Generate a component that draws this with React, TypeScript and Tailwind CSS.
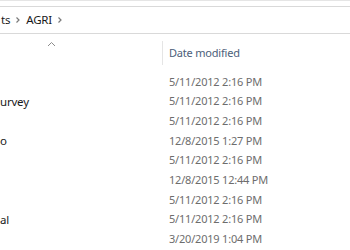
const ROWS = [
  { name: "", date: "5/11/2012 2:16 PM" },
  { name: "urvey", date: "5/11/2012 2:16 PM" },
  { name: "", date: "5/11/2012 2:16 PM" },
  { name: "o", date: "12/8/2015 1:27 PM" },
  { name: "", date: "5/11/2012 2:16 PM" },
  { name: "", date: "12/8/2015 12:44 PM" },
  { name: "", date: "5/11/2012 2:16 PM" },
  { name: "al", date: "5/11/2012 2:16 PM" },
  { name: "", date: "3/20/2019 1:04 PM" },
];

function Chevron() {
  return (
    <svg width="6" height="8" viewBox="0 0 6 8" className="mx-[5px]">
      <path d="M1.5 1.5 L4 4 L1.5 6.5" fill="none" stroke="#7a7a7a" strokeWidth="1.2" />
    </svg>
  );
}

export default function App() {
  return (
    <div
      className="w-[350px] h-[250px] overflow-hidden bg-white text-[11.5px] tracking-[-0.2px]"
      style={{ fontFamily: '"Noto Sans", "Open Sans", sans-serif' }}
    >
      <div className="h-[1px] bg-[#e5e5e5]" />
      <div className="h-[5px] bg-white" />
      <div className="h-[28px] border-y border-[#d9d9d9] flex items-center">
        <span className="text-[#1a1a1a] ml-[1px]">ts</span>
        <Chevron />
        <span className="text-[#1a1a1a]">AGRI</span>
        <Chevron />
      </div>
      <div className="flex h-[30px] mt-[6px]">
        <div className="w-[162px] flex justify-start pl-[47px] pt-[1px]">
          <svg width="9" height="6" viewBox="0 0 9 6">
            <path d="M1 5 L4.5 1.5 L8 5" fill="none" stroke="#8c8c8c" strokeWidth="1" />
          </svg>
        </div>
        <div className="border-l border-[#e5e5e5] h-[24px] mt-[1px] pl-[6px] flex items-center text-[#4c607a] text-[11px]">
          Date modified
        </div>
      </div>
      <div className="flex flex-col mt-[2px]">
        {ROWS.map((r, i) => (
          <div key={i} className="flex h-[19.7px] items-center">
            <div className="w-[169px] text-[#1a1a1a]">{r.name}</div>
            <div className="text-[#6d6d6d] text-[11px]">{r.date}</div>
          </div>
        ))}
      </div>
    </div>
  );
}
